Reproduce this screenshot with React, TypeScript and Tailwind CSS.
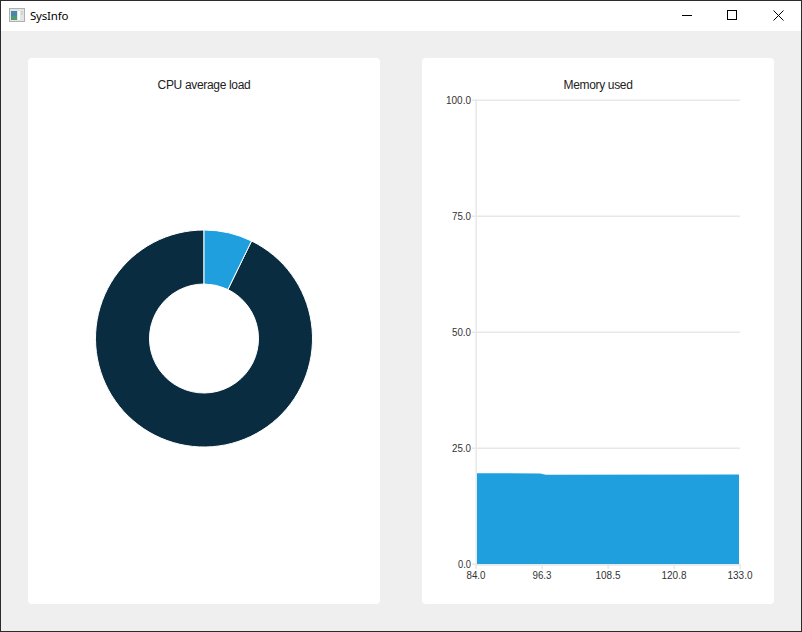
import React from 'react';

const cx = 109;
const cy = 108.5;
const outer = 108.5;
const inner = 54.5;

function polar(r: number, deg: number) {
  const a = (deg * Math.PI) / 180;
  return `${cx + r * Math.sin(a)} ${cy - r * Math.cos(a)}`;
}

function slice(from: number, to: number) {
  const large = to - from > 180 ? 1 : 0;
  return `M${polar(outer, from)} A${outer} ${outer} 0 ${large} 1 ${polar(outer, to)} L${polar(inner, to)} A${inner} ${inner} 0 ${large} 0 ${polar(inner, from)} Z`;
}

const yTicks = [
  { y: 100, label: '100.0', w: 25 },
  { y: 216, label: '75.0', w: 19 },
  { y: 332, label: '50.0', w: 19 },
  { y: 448, label: '25.0', w: 19 },
  { y: 564, label: '0.0', w: 13 },
];

const xTicks = [
  { x: 476, label: '84.0', w: 19 },
  { x: 542, label: '96.3', w: 19 },
  { x: 608, label: '108.5', w: 25 },
  { x: 674, label: '120.8', w: 25 },
  { x: 740, label: '133.0', w: 25 },
];

const DonutChart: React.FC = () => (
  <svg width="218" height="218" viewBox="0 0 218 218" className="block">
    <path d={slice(26, 360)} fill="#092c40" stroke="#ffffff" strokeWidth="1" />
    <path d={slice(0, 26)} fill="#209fdf" stroke="#ffffff" strokeWidth="1" />
  </svg>
);

const MemoryChart: React.FC = () => (
  <svg width="352" height="512" viewBox="422 92 352 512" className="block">
    {yTicks.map((t) => (
      <g key={t.label}>
        <line x1="472" x2="740" y1={t.y + 0.3} y2={t.y + 0.3} stroke="#e8e8e8" strokeWidth="1.5" />
        <text x={471 - t.w} y={t.y + 4} textLength={t.w} lengthAdjust="spacingAndGlyphs" fontSize="11.5" fill="#333333" className="font-['Liberation_Sans',sans-serif]">
          {t.label}
        </text>
      </g>
    ))}
    <line x1="476.2" x2="476.2" y1="99.5" y2="569" stroke="#e8e8e8" strokeWidth="1.5" />
    <path d="M477 473.2 L540 473.4 L546 474.8 L739 474.4 L739 564 L477 564 Z" fill="#209fdf" />
    <line x1="476" x2="741" y1="565" y2="565" stroke="#e8e8e8" strokeWidth="1.5" />
    {xTicks.map((t) => (
      <g key={t.label}>
        <line x1={t.x + 0.2} x2={t.x + 0.2} y1="565" y2="569" stroke="#e8e8e8" strokeWidth="1.5" />
        <text x={t.x - t.w / 2} y="579" textLength={t.w} lengthAdjust="spacingAndGlyphs" fontSize="11.5" fill="#333333" className="font-['Liberation_Sans',sans-serif]">
          {t.label}
        </text>
      </g>
    ))}
  </svg>
);

export default function App() {
  return (
    <div className="w-[802px] h-[632px] flex flex-col border border-[#2b2b2b] bg-[#efefef] overflow-hidden">
      {/* title bar */}
      <div className="h-[30px] bg-white flex items-center shrink-0">
        <svg width="16" height="14" viewBox="0 0 16 14" className="ml-[8px] mb-[2px]">
          <rect x="0.5" y="0.5" width="15" height="13" fill="#e4e4e4" stroke="#b0b0b0" />
          <rect x="2" y="3" width="6" height="5" fill="#4a86a8" />
          <rect x="2" y="8" width="6" height="4" fill="#4f9a70" />
          <rect x="9" y="3" width="2" height="9" fill="#ffffff" />
          <rect x="12" y="3" width="2" height="4" fill="#c4dcd8" />
        </svg>
        <span className="ml-[5px] text-[11.5px] tracking-[-0.2px] text-black font-['Noto_Sans',sans-serif]">SysInfo</span>
        <div className="ml-auto flex h-full">
          <div className="w-[46px] h-full flex justify-center pt-[9px]">
            <svg width="12" height="10" viewBox="0 0 12 10"><line x1="2" x2="12" y1="5.5" y2="5.5" stroke="#000" /></svg>
          </div>
          <div className="w-[46px] h-full flex justify-center pt-[9px]">
            <svg width="10" height="10" viewBox="0 0 10 10"><rect x="0.5" y="0.5" width="9" height="9" fill="none" stroke="#000" /></svg>
          </div>
          <div className="w-[46px] h-full flex justify-center pt-[9px]">
            <svg width="11" height="11" viewBox="0 0 11 11"><path d="M0.5 0.5 L10.5 10.5 M10.5 0.5 L0.5 10.5" stroke="#000" fill="none" /></svg>
          </div>
        </div>
      </div>

      {/* charts */}
      <div className="flex-1 flex gap-[42px] p-[27px]">
        <div className="flex-1 bg-white rounded flex flex-col">
          <div className="h-[34px] pt-[20px] text-center text-[12px] tracking-[-0.33px] leading-[15px] text-[#222222] font-['Liberation_Sans',sans-serif]">CPU average load</div>
          <div className="flex-1 pb-[18px] flex items-center justify-center">
            <DonutChart />
          </div>
        </div>
        <div className="flex-1 bg-white rounded flex flex-col">
          <div className="h-[34px] pt-[20px] text-center text-[12px] tracking-[-0.33px] leading-[15px] text-[#222222] font-['Liberation_Sans',sans-serif]">Memory used</div>
          <MemoryChart />
        </div>
      </div>
    </div>
  );
}
